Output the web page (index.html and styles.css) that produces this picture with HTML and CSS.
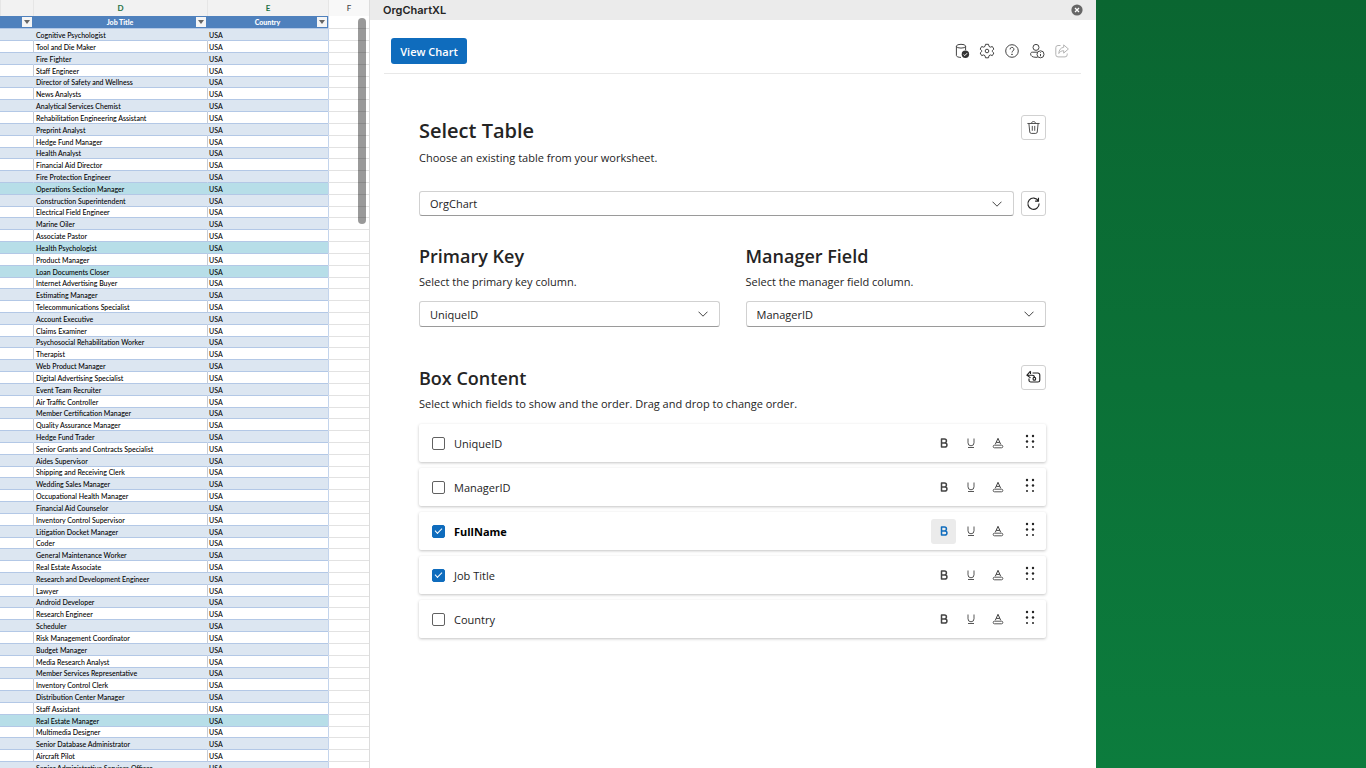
FILE: index.html
```html
<!DOCTYPE html>
<html lang="en">
<head>
<meta charset="utf-8">
<title>OrgChartXL</title>
<meta name="viewport" content="width=device-width, initial-scale=1">
<link rel="stylesheet" href="styles.css">
</head>
<body>
<div class="app">
<section class="sheet" aria-label="Worksheet">
<table class="grid">
<colgroup><col class="col-c"><col class="col-d"><col class="col-e"><col class="col-f"></colgroup>
<thead>
<tr class="letters"><th></th><th>D</th><th>E</th><th class="plain">F</th></tr>
<tr class="fields"><th><button class="filter" type="button" aria-label="Filter"></button></th><th>Job Title<button class="filter" type="button" aria-label="Filter job title"></button></th><th>Country<button class="filter" type="button" aria-label="Filter country"></button></th><td></td></tr>
</thead>
<tbody>
<tr><td></td><td>Cognitive Psychologist</td><td>USA</td><td></td></tr>
<tr><td></td><td>Tool and Die Maker</td><td>USA</td><td></td></tr>
<tr><td></td><td>Fire Fighter</td><td>USA</td><td></td></tr>
<tr><td></td><td>Staff Engineer</td><td>USA</td><td></td></tr>
<tr><td></td><td>Director of Safety and Wellness</td><td>USA</td><td></td></tr>
<tr><td></td><td>News Analysts</td><td>USA</td><td></td></tr>
<tr><td></td><td>Analytical Services Chemist</td><td>USA</td><td></td></tr>
<tr><td></td><td>Rehabilitation Engineering Assistant</td><td>USA</td><td></td></tr>
<tr><td></td><td>Preprint Analyst</td><td>USA</td><td></td></tr>
<tr><td></td><td>Hedge Fund Manager</td><td>USA</td><td></td></tr>
<tr><td></td><td>Health Analyst</td><td>USA</td><td></td></tr>
<tr><td></td><td>Financial Aid Director</td><td>USA</td><td></td></tr>
<tr><td></td><td>Fire Protection Engineer</td><td>USA</td><td></td></tr>
<tr class="marked"><td></td><td>Operations Section Manager</td><td>USA</td><td></td></tr>
<tr><td></td><td>Construction Superintendent</td><td>USA</td><td></td></tr>
<tr><td></td><td>Electrical Field Engineer</td><td>USA</td><td></td></tr>
<tr><td></td><td>Marine Oiler</td><td>USA</td><td></td></tr>
<tr><td></td><td>Associate Pastor</td><td>USA</td><td></td></tr>
<tr class="marked"><td></td><td>Health Psychologist</td><td>USA</td><td></td></tr>
<tr><td></td><td>Product Manager</td><td>USA</td><td></td></tr>
<tr class="marked"><td></td><td>Loan Documents Closer</td><td>USA</td><td></td></tr>
<tr><td></td><td>Internet Advertising Buyer</td><td>USA</td><td></td></tr>
<tr><td></td><td>Estimating Manager</td><td>USA</td><td></td></tr>
<tr><td></td><td>Telecommunications Specialist</td><td>USA</td><td></td></tr>
<tr><td></td><td>Account Executive</td><td>USA</td><td></td></tr>
<tr><td></td><td>Claims Examiner</td><td>USA</td><td></td></tr>
<tr><td></td><td>Psychosocial Rehabilitation Worker</td><td>USA</td><td></td></tr>
<tr><td></td><td>Therapist</td><td>USA</td><td></td></tr>
<tr><td></td><td>Web Product Manager</td><td>USA</td><td></td></tr>
<tr><td></td><td>Digital Advertising Specialist</td><td>USA</td><td></td></tr>
<tr><td></td><td>Event Team Recruiter</td><td>USA</td><td></td></tr>
<tr><td></td><td>Air Traffic Controller</td><td>USA</td><td></td></tr>
<tr><td></td><td>Member Certification Manager</td><td>USA</td><td></td></tr>
<tr><td></td><td>Quality Assurance Manager</td><td>USA</td><td></td></tr>
<tr><td></td><td>Hedge Fund Trader</td><td>USA</td><td></td></tr>
<tr><td></td><td>Senior Grants and Contracts Specialist</td><td>USA</td><td></td></tr>
<tr><td></td><td>Aides Supervisor</td><td>USA</td><td></td></tr>
<tr><td></td><td>Shipping and Receiving Clerk</td><td>USA</td><td></td></tr>
<tr><td></td><td>Wedding Sales Manager</td><td>USA</td><td></td></tr>
<tr><td></td><td>Occupational Health Manager</td><td>USA</td><td></td></tr>
<tr><td></td><td>Financial Aid Counselor</td><td>USA</td><td></td></tr>
<tr><td></td><td>Inventory Control Supervisor</td><td>USA</td><td></td></tr>
<tr><td></td><td>Litigation Docket Manager</td><td>USA</td><td></td></tr>
<tr><td></td><td>Coder</td><td>USA</td><td></td></tr>
<tr><td></td><td>General Maintenance Worker</td><td>USA</td><td></td></tr>
<tr><td></td><td>Real Estate Associate</td><td>USA</td><td></td></tr>
<tr><td></td><td>Research and Development Engineer</td><td>USA</td><td></td></tr>
<tr><td></td><td>Lawyer</td><td>USA</td><td></td></tr>
<tr><td></td><td>Android Developer</td><td>USA</td><td></td></tr>
<tr><td></td><td>Research Engineer</td><td>USA</td><td></td></tr>
<tr><td></td><td>Scheduler</td><td>USA</td><td></td></tr>
<tr><td></td><td>Risk Management Coordinator</td><td>USA</td><td></td></tr>
<tr><td></td><td>Budget Manager</td><td>USA</td><td></td></tr>
<tr><td></td><td>Media Research Analyst</td><td>USA</td><td></td></tr>
<tr><td></td><td>Member Services Representative</td><td>USA</td><td></td></tr>
<tr><td></td><td>Inventory Control Clerk</td><td>USA</td><td></td></tr>
<tr><td></td><td>Distribution Center Manager</td><td>USA</td><td></td></tr>
<tr><td></td><td>Staff Assistant</td><td>USA</td><td></td></tr>
<tr class="marked"><td></td><td>Real Estate Manager</td><td>USA</td><td></td></tr>
<tr><td></td><td>Multimedia Designer</td><td>USA</td><td></td></tr>
<tr><td></td><td>Senior Database Administrator</td><td>USA</td><td></td></tr>
<tr><td></td><td>Aircraft Pilot</td><td>USA</td><td></td></tr>
<tr><td></td><td>Senior Administrative Services Officer</td><td>USA</td><td></td></tr>
</tbody>
</table>
<div class="scroll-thumb"></div>
</section>

<main class="pane">
<header class="titlebar">
<h1>OrgChartXL</h1>
<button class="close" type="button" aria-label="Close"><svg viewBox="0 0 12 12"><circle cx="6" cy="6" r="5.6" fill="#666"/><path d="M4 4l4 4M8 4l-4 4" stroke="#fff" stroke-width="1.3"/></svg></button>
</header>
<div class="toolbar">
<button class="primary" type="button">View Chart</button>
<div class="tools">
<button type="button" aria-label="Data source"><svg viewBox="0 0 16 16"><ellipse cx="7" cy="3.2" rx="4.6" ry="1.9"/><path d="M2.4 3.2v9.3c0 1.100 2 1.900 4.600 1.900M11.600 3.200v4"/><circle cx="11.400" cy="11.300" r="3.700" fill="#333" stroke="none"/><path d="M9.600 11.500l1.200 1.100 2.300-2.400" stroke="#fff"/></svg></button>
<button type="button" aria-label="Settings"><svg viewBox="0 0 16 16"><path d="M6.500 1.300h3l.5 2.100 1.300.75 2.050-.65 1.500 2.600-1.550 1.450v1l1.550 1.450-1.500 2.600-2.050-.65-1.300.75-.5 2.100h-3L6 12.700l-1.300-.75-2.050.65-1.500-2.600L2.700 8.550v-1L1.150 6.100l1.500-2.600 2.050.65L6 3.400z"/><circle cx="8" cy="8" r="1.800"/></svg></button>
<button type="button" aria-label="Help"><svg viewBox="0 0 16 16"><circle cx="8" cy="8" r="6.300"/><path d="M6.100 6.400a1.900 1.900 0 1 1 2.900 1.500C8.300 8.400 8 8.700 8 9.500"/><circle cx="8" cy="11.300" r=".4" fill="#333"/></svg></button>
<button type="button" aria-label="Account"><svg viewBox="0 0 16 16"><circle cx="7" cy="4.400" r="3"/><path d="M8.500 9.200H3.200c-.9 0-1.600.7-1.600 1.600 0 2.300 2 3.500 5.400 3.500h1.600"/><circle cx="11.500" cy="11.300" r="3.500"/><path d="M11.500 11v2.200M11.500 9.300v.7"/></svg></button>
<button type="button" aria-label="Share" disabled><svg viewBox="0 0 16 16"><path d="M6.500 2.500H4A2.200 2.200 0 0 0 1.800 4.700v7A2.200 2.200 0 0 0 4 13.900h7a2.200 2.200 0 0 0 2.200-2.200v-1.200"/><path d="M9.700 1.900l4.700 4.100-4.700 4.100V7.700C7.400 7.700 5.800 8.700 4.800 10.500c.2-3.600 1.900-5.800 4.900-6.200z"/></svg></button>
</div>
</div>

<form class="content">
<section class="block first">
<div class="head"><h2>Select Table</h2><button class="square" type="button" aria-label="Delete"><svg viewBox="0 0 16 16"><path d="M1.500 3.700h13M6 3.500c0-1.300.9-1.900 2-1.900s2 .6 2 1.900M3.100 3.900l.9 8.900c.1.900.7 1.500 1.600 1.500h4.800c.9 0 1.500-.6 1.600-1.500l.9-8.900M6.700 6.300v5.200M9.300 6.300v5.200"/></svg></button></div>
<label class="hint" for="table">Choose an existing table from your worksheet.</label>
<div class="pick-row">
<div class="pick"><select id="table"><option>OrgChart</option></select><svg viewBox="0 0 10 6"><path d="M.5.7L5 5.200 9.500.7"/></svg></div>
<button class="square" type="button" aria-label="Refresh"><svg class="dark" viewBox="0 0 16 16"><path d="M13.200 5.200A6 6 0 1 0 14 8M13.300 1.800v3.700H9.700"/></svg></button>
</div>
</section>

<div class="pair">
<section class="field">
<h2>Primary Key</h2>
<label class="hint" for="pk">Select the primary key column.</label>
<div class="pick"><select id="pk"><option>UniqueID</option></select><svg viewBox="0 0 10 6"><path d="M.5.7L5 5.200 9.500.7"/></svg></div>
</section>
<section class="field">
<h2>Manager Field</h2>
<label class="hint" for="mf">Select the manager field column.</label>
<div class="pick"><select id="mf"><option>ManagerID</option></select><svg viewBox="0 0 10 6"><path d="M.5.7L5 5.200 9.500.7"/></svg></div>
</section>
</div>

<section class="block">
<div class="head"><h2>Box Content</h2><button class="square" type="button" aria-label="Reset fields"><svg class="dark" viewBox="0 0 16 16"><path d="M7 3.200h5.700a2 2 0 0 1 2 2v5.600a2 2 0 0 1-2 2H5.200a2 2 0 0 1-2-2V9M4.800 1.300L1 5.600l3.800 2.800M1 5.600h5.400c1.500 0 2.500.8 2.500 2M4.800 1.300v3"/><rect x="7.600" y="7.800" width="2.600" height="3" rx="1"/></svg></button></div>
<p class="hint">Select which fields to show and the order. Drag and drop to change order.</p>
<ul class="cards">
<li><label><input type="checkbox">UniqueID</label><div class="styles"><button type="button" aria-label="Bold"><svg><use href="#bold"/></svg></button><button type="button" aria-label="Underline"><svg><use href="#under"/></svg></button><button type="button" aria-label="Text color"><svg><use href="#color"/></svg></button></div><svg class="drag"><use href="#dots"/></svg></li>
<li><label><input type="checkbox">ManagerID</label><div class="styles"><button type="button" aria-label="Bold"><svg><use href="#bold"/></svg></button><button type="button" aria-label="Underline"><svg><use href="#under"/></svg></button><button type="button" aria-label="Text color"><svg><use href="#color"/></svg></button></div><svg class="drag"><use href="#dots"/></svg></li>
<li><label class="strong"><input type="checkbox" checked>FullName</label><div class="styles"><button class="on" type="button" aria-label="Bold" aria-pressed="true"><svg><use href="#bold"/></svg></button><button type="button" aria-label="Underline"><svg><use href="#under"/></svg></button><button type="button" aria-label="Text color"><svg><use href="#color"/></svg></button></div><svg class="drag"><use href="#dots"/></svg></li>
<li><label><input type="checkbox" checked>Job Title</label><div class="styles"><button type="button" aria-label="Bold"><svg><use href="#bold"/></svg></button><button type="button" aria-label="Underline"><svg><use href="#under"/></svg></button><button type="button" aria-label="Text color"><svg><use href="#color"/></svg></button></div><svg class="drag"><use href="#dots"/></svg></li>
<li><label><input type="checkbox">Country</label><div class="styles"><button type="button" aria-label="Bold"><svg><use href="#bold"/></svg></button><button type="button" aria-label="Underline"><svg><use href="#under"/></svg></button><button type="button" aria-label="Text color"><svg><use href="#color"/></svg></button></div><svg class="drag"><use href="#dots"/></svg></li>
</ul>
</section>
</form>
</main>
<aside class="backdrop"></aside>
</div>

<svg class="defs" aria-hidden="true">
<symbol id="bold" viewBox="0 0 12 12"><path d="M3.500 2h3a1.900 1.900 0 0 1 0 3.900h-3zM3.500 5.900h3.400a2.050 2.050 0 0 1 0 4.100H3.500z" fill="none" stroke="currentColor" stroke-width="1.500" stroke-linejoin="round"/></symbol>
<symbol id="under" viewBox="0 0 12 12"><path d="M3 1.500v4.300a3 3 0 0 0 6 0V1.500M3 10.500h6" fill="none" stroke="currentColor" stroke-width=".9"/></symbol>
<symbol id="color" viewBox="0 0 12 12"><path d="M3.300 7.300L6 1.300l2.700 6M4.200 5.400h3.600" fill="none" stroke="currentColor" stroke-width="1"/><rect x="1.200" y="8.200" width="9.600" height="2.600" rx="1.300" fill="none" stroke="currentColor" stroke-width=".9"/></symbol>
<symbol id="dots" viewBox="0 0 10 14"><g fill="#222"><circle cx="2" cy="2" r="1.200"/><circle cx="8" cy="2" r="1.200"/><circle cx="2" cy="7.500" r="1.200"/><circle cx="8" cy="7.500" r="1.200"/><circle cx="2" cy="13" r="1"/><circle cx="8" cy="13" r="1"/></g></symbol>
</svg>
</body>
</html>
```

FILE: styles.css
```css
* { box-sizing: border-box; }
body {
  margin: 0;
  color: #242424;
  font-family: "Open Sans", "Noto Sans", sans-serif;
  font-size: 11px;
}
button, select { font: inherit; color: inherit; }
button { padding: 0; border: 0; background: none; }
svg { display: block; fill: none; stroke: #444; }
h1, h2, p, ul { margin: 0; padding: 0; }
.defs { display: none; }

.app {
  display: grid;
  grid-template-columns: 370px minmax(0, 1fr) 270px;
  height: 100vh;
  overflow: hidden;
}

/* Worksheet */
.sheet {
  position: relative;
  overflow: hidden;
  border-right: 1px solid #dcdcdc;
  background: #fff;
}
.grid {
  width: 100%;
  table-layout: fixed;
  border-collapse: separate;
  border-spacing: 0;
  color: #000;
  font-family: Lato, sans-serif;
  font-size: 7px;
  line-height: 10px;
  font-weight: 500;
}
.col-c { width: 33px; }
.col-d { width: 174px; }
.col-e { width: 121px; }
.grid th, .grid td { padding: 0 0 0 2px; white-space: nowrap; overflow: hidden; }
.grid th { padding: 0; }
.grid td:nth-child(3) { padding-left: 1px; }
.grid tbody tr { height: 12px; }
.grid tbody tr:nth-child(11n + 5), .grid tbody tr:nth-child(11n + 11) { height: 11px; }
.grid tbody td {
  border-left: 1px solid #c5cbd6;
  border-bottom: 1px solid #b3c8e6;
}
.grid tbody td:first-child { border-left: 0; }
.grid tbody tr:nth-child(odd) td:not(:last-child) { background: #dce6f1; border-left-color: #dce6f1; }
.grid tbody tr.marked td:not(:last-child) { background: #b7dee8; border-left-color: #b7dee8; }
.grid tbody td:last-child { border-left-color: #c3d4ec; border-bottom-color: #e2e2e2; }
.letters { height: 16px; }
.letters th {
  border-left: 1px solid #e6e6e6;
  background: #f2f2f2;
  color: #1e7145;
  font-size: 8px;
  font-weight: 700;
}
.letters .plain { background: #f8f8f8; color: #444; font-weight: 500; }
.fields { height: 13px; }
.fields th {
  position: relative;
  border-bottom: 1px solid #b3c8e6;
  background: #4f81bd;
  color: #fff;
  font-weight: 900;
}
.fields td { border-bottom: 1px solid #e2e2e2; border-left: 1px solid #c3d4ec; }
.filter {
  position: absolute;
  top: 1px;
  right: 1px;
  display: grid;
  place-items: center;
  width: 10px;
  height: 10px;
  background: #f5f5f5;
}
.filter::before {
  content: "";
  border: 3px solid transparent;
  border-top: 4px solid #666;
  border-bottom: 0;
}
.scroll-thumb {
  position: absolute;
  top: 18px;
  right: 3px;
  width: 8px;
  height: 206px;
  border-radius: 4px;
  background: #0006;
}

/* Task pane */
.pane { background: #fff; overflow: hidden; }
.titlebar {
  display: flex;
  align-items: center;
  justify-content: space-between;
  height: 20px;
  padding: 0 13px;
  background: #ebebeb;
}
.titlebar h1 { font: 600 11px/20px Inter, sans-serif; }
.close svg { width: 12px; height: 12px; stroke: none; }
.toolbar {
  display: flex;
  align-items: center;
  justify-content: space-between;
  margin: 0 15px 0 14px;
  padding: 18px 11px 9px 7px;
  border-bottom: 1px solid #e8e8e8;
}
.primary {
  width: 76px;
  height: 26px;
  border-radius: 3px;
  background: #0f6cbd;
  color: #fff;
  font-weight: 600;
}
.tools { display: flex; gap: 9px; }
.tools svg { width: 16px; height: 16px; }
.tools button:disabled { opacity: .4; }

.content { padding: 41px 50px 20px 49px; }
.head { display: flex; align-items: flex-start; justify-content: space-between; }
h2 { font-size: 18px; line-height: 26px; font-weight: 600; }
.first h2 { font-size: 20px; line-height: 32px; }
.hint { display: block; margin-top: 5px; line-height: 16px; }
.first .hint { margin-top: 3px; }
.square {
  display: grid;
  place-items: center;
  flex: none;
  width: 25px;
  height: 25px;
  border: 1px solid #d1d1d1;
  border-radius: 3px;
}
.square svg { width: 15px; height: 15px; }
.square .dark { stroke: #222; stroke-width: 1.2; }
.pick-row { display: flex; gap: 7px; margin-top: 25px; }
.pick { display: grid; flex: 1; align-items: center; }
.pick > * { grid-area: 1 / 1; }
.pick select {
  appearance: none;
  width: 100%;
  height: 26px;
  padding: 0 30px 0 10px;
  border: 1px solid #d1d1d1;
  border-bottom-color: #9a9a9a;
  border-radius: 3px;
  background: #fff;
}
.pick-row select { height: 25px; }
.pick svg { justify-self: end; width: 10px; height: 6px; margin-right: 12px; pointer-events: none; }
.pair { display: grid; grid-template-columns: 1fr 1fr; gap: 26px; margin-top: 27px; }
.field .pick { margin-top: 11px; }
.pair + .block { margin-top: 38px; }

.cards { display: grid; gap: 6px; margin-top: 12px; list-style: none; }
.cards li {
  display: flex;
  align-items: center;
  height: 38px;
  padding: 0 11px 0 13px;
  border-radius: 2px;
  background: #fff;
  box-shadow: 0 1px 3px #0000003d;
}
.cards label { display: flex; flex: 1; align-items: center; gap: 9px; }
.strong { font-weight: 700; color: #000; }
.cards input {
  display: grid;
  place-items: center;
  appearance: none;
  width: 13px;
  height: 13px;
  margin: 0;
  border: 1px solid #616161;
  border-radius: 2px;
}
.cards input:checked { border-color: #0f6cbd; background: #0f6cbd; }
.cards input:checked::before {
  content: "";
  width: 6px;
  height: 3px;
  margin-bottom: 2px;
  border: solid #fff;
  border-width: 0 0 1px 1px;
  rotate: -45deg;
}
.styles { display: flex; gap: 2px; margin-right: 15px; color: #444; }
.styles button { display: grid; place-items: center; width: 25px; height: 25px; border-radius: 3px; }
.styles svg { width: 12px; height: 12px; stroke: none; }
.styles .on { background: #ebebeb; color: #0f6cbd; }
.drag { width: 10px; height: 14px; margin-bottom: 4px; stroke: none; }

.backdrop { background: linear-gradient(#0a6631, #0c7c3d); }
```
